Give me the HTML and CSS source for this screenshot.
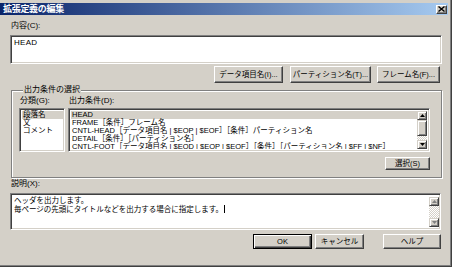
FILE: index.html
```html
<!DOCTYPE html>
<html lang="ja">
<head>
<meta charset="utf-8">
<link rel="stylesheet" href="styles.css">
</head>
<body>
<div class="window">
  <div class="titlebar">
    <span class="title">拡張定義の編集</span>
    <span class="close"><svg width="7" height="6" viewBox="0 0 7 6"><path d="M0.5 0.5 L6.5 5.5 M6.5 0.5 L0.5 5.5" stroke="#000" stroke-width="1.4"/></svg></span>
  </div>
  <div class="body">
    <div class="label">内容(C):</div>
    <div class="edit edit-content"><div class="edit-text content-text">HEAD</div></div>
    <div class="btnrow btnrow-top">
      <button class="btn btn-data">データ項目名(I)...</button>
      <button class="btn btn-part">パーティション名(T)...</button>
      <button class="btn btn-frame">フレーム名(F)...</button>
    </div>
    <fieldset class="group">
      <legend>出力条件の選択</legend>
      <div class="cols">
        <div class="col">
          <div class="label sub-label">分類(G):</div>
          <div class="list list-cat">
            <div class="item sel">段落名</div>
            <div class="item">文</div>
            <div class="item">コメント</div>
          </div>
        </div>
        <div class="col">
          <div class="label sub-label">出力条件(D):</div>
          <div class="list list-cond">
            <div class="items">
              <div class="item sel">HEAD</div>
              <div class="item">FRAME［条件］フレーム名</div>
              <div class="item">CNTL-HEAD［データ項目名 | $EOP | $EOF］［条件］パーティション名</div>
              <div class="item">DETAIL［条件］［パーティション名］</div>
              <div class="item">CNTL-FOOT［データ項目名 | $EOD | $EOP | $EOF］［条件］［パーティション名 | $FF | $NF］</div>
            </div>
            <div class="vscroll">
              <div class="arrow up"><svg width="5" height="3" viewBox="0 0 5 3"><path d="M2.5 0 L5 3 L0 3 Z" fill="#000"/></svg></div>
              <div class="thumb"></div>
              <div class="track"></div>
              <div class="arrow down"><svg width="5" height="3" viewBox="0 0 5 3"><path d="M0 0 L5 0 L2.5 3 Z" fill="#000"/></svg></div>
            </div>
          </div>
        </div>
      </div>
      <div class="btnrow btnrow-select">
        <button class="btn btn-select">選択(S)</button>
      </div>
    </fieldset>
    <div class="label label-desc">説明(X):</div>
    <div class="edit edit-desc">
      <div class="edit-text desc-text">ヘッダを出力します。<br>毎ページの先頭にタイトルなどを出力する場合に指定します。<span class="caret"></span></div>
      <div class="vscroll vscroll-desc">
        <div class="arrow up"><svg width="5" height="3" viewBox="0 0 5 3"><path d="M2.5 0 L5 3 L0 3 Z" fill="#808080"/></svg></div>
        <div class="track"></div>
        <div class="arrow down"><svg width="5" height="3" viewBox="0 0 5 3"><path d="M0 0 L5 0 L2.5 3 Z" fill="#808080"/></svg></div>
      </div>
    </div>
    <div class="btnrow btnrow-bottom">
      <button class="btn btn-default btn-ok">OK</button>
      <button class="btn btn-cancel">キャンセル</button>
      <button class="btn btn-help">ヘルプ</button>
    </div>
  </div>
</div>
</body>
</html>
```

FILE: styles.css
```css
html, body {
  margin: 0;
  padding: 0;
  background: #d4d0c8;
}
body {
  font-family: "Liberation Sans", "Noto Sans CJK JP", sans-serif;
  font-size: 7.5px;
  color: #000;
}
.window {
  width: 452px;
  height: 267px;
  box-sizing: border-box;
  padding-top: 3px;
  background: #d4d0c8;
  box-shadow: inset -1px -1px 0 #404040, inset -2px -2px 0 #808080;
  overflow: hidden;
}
.titlebar {
  width: 448px;
  height: 12px;
  display: flex;
  align-items: center;
  justify-content: space-between;
  background: linear-gradient(to right, #0a246a, #a6caf0);
}
.title {
  color: #fff;
  font-weight: bold;
  font-size: 9px;
  line-height: 12px;
  padding-left: 3px;
  letter-spacing: -0.3px;
}
.close {
  width: 11px;
  height: 9px;
  box-sizing: border-box;
  margin-right: 1px;
  background: #d4d0c8;
  border: 1px solid;
  border-color: #fff #404040 #404040 #fff;
  box-shadow: inset -1px -1px 0 #808080;
  display: flex;
  align-items: center;
  justify-content: center;
}
.close svg { display: block; }
.body {
  padding-left: 10px;
}
.label {
  line-height: 10px;
  height: 10px;
  margin-top: 6px;
  padding-left: 1px;
  white-space: nowrap;
  font-size: 8px;
}
.edit {
  box-sizing: border-box;
  background: #fff;
  border: 1px solid;
  border-color: #808080 #fff #fff #808080;
  box-shadow: inset 1px 1px 0 #404040, inset -1px -1px 0 #d4d0c8;
  position: relative;
  overflow: hidden;
}
.edit-content {
  margin-top: 4px;
  width: 432px;
  height: 29px;
}
.edit-text {
  padding: 2px 0 0 3px;
  line-height: 8px;
  white-space: nowrap;
}
.content-text {
  font-size: 8px;
  padding-top: 3px;
  letter-spacing: 0.3px;
}
.btnrow {
  display: flex;
  justify-content: flex-end;
}
.btn {
  font-family: inherit;
  font-size: 7.5px;
  color: #000;
  margin: 0;
  padding: 0;
  background: #d4d0c8;
  box-sizing: border-box;
  border: 1px solid;
  border-color: #fff #404040 #404040 #fff;
  box-shadow: inset -1px -1px 0 #808080;
  white-space: nowrap;
  line-height: 1;
  display: flex;
  align-items: center;
  justify-content: center;
}
.btnrow-top {
  margin-top: 2px;
  width: 430px;
}
.btnrow-top .btn { height: 17px; }
.btn-data { width: 69px; }
.btn-part { width: 81px; margin-left: 7px; }
.btn-frame { width: 63px; margin-left: 6px; }

.group {
  margin: 2px 0 0 1px;
  padding: 0 11px 7px 7px;
  width: 431px;
  box-sizing: border-box;
  border: 1px solid #808080;
  box-shadow: inset 1px 1px 0 #fff, 1px 1px 0 #fff;
  min-width: 0;
}
.group legend {
  padding: 0 1px;
  margin-left: 4px;
  line-height: 10px;
  height: 10px;
  font-size: 8px;
  background: #d4d0c8;
}
.cols {
  display: flex;
  gap: 3px;
}
.sub-label {
  margin-top: 1px;
  margin-bottom: 2px;
}
.list {
  box-sizing: border-box;
  height: 44px;
  background: #fff;
  border: 1px solid;
  border-color: #808080 #fff #fff #808080;
  box-shadow: inset 1px 1px 0 #404040, inset -1px -1px 0 #d4d0c8;
  padding: 2px 2px 2px 2px;
  overflow: hidden;
}
.list-cat {
  width: 46px;
  padding-right: 1px;
}
.list-cond {
  width: 362px;
  display: flex;
}
.items {
  flex: 1;
  min-width: 0;
  overflow: hidden;
}
.item {
  line-height: 8px;
  height: 8px;
  padding-left: 1px;
  white-space: nowrap;
}
.item.sel {
  background: #d4d0c8;
}
.vscroll {
  width: 10px;
  display: flex;
  flex-direction: column;
  flex: none;
}
.arrow {
  height: 9px;
  flex: none;
  box-sizing: border-box;
  background: #d4d0c8;
  border: 1px solid;
  border-color: #d4d0c8 #404040 #404040 #d4d0c8;
  box-shadow: inset 1px 1px 0 #fff, inset -1px -1px 0 #808080;
  display: flex;
  align-items: center;
  justify-content: center;
}
.arrow svg { display: block; }
.thumb {
  height: 16px;
  flex: none;
  box-sizing: border-box;
  background: #d4d0c8;
  border: 1px solid;
  border-color: #d4d0c8 #404040 #404040 #d4d0c8;
  box-shadow: inset 1px 1px 0 #fff, inset -1px -1px 0 #808080;
}
.track {
  flex: 1;
  background: repeating-conic-gradient(#fff 0 25%, #d4d0c8 0 50%) 0 0 / 2px 2px;
}
.btnrow-select {
  margin-top: 5px;
}
.btn-select {
  width: 45px;
  height: 13px;
}
.label-desc {
  margin-top: 1px;
}
.edit-desc {
  margin-top: 4px;
  width: 431px;
  height: 37px;
  display: flex;
  padding: 2px 1px 2px 2px;
}
.desc-text {
  flex: 1;
  padding: 1px 0 0 1px;
}
.caret {
  display: inline-block;
  width: 1px;
  height: 8px;
  background: #000;
  vertical-align: -1px;
  margin-left: 1px;
}
.vscroll-desc {
  width: 10px;
  margin-top: 1px;
}
.btnrow-bottom {
  margin-top: 4px;
  width: 431px;
}
.btnrow-bottom .btn { height: 15px; }
.btn-default {
  border: 1px solid #000;
  box-shadow: inset 1px 1px 0 #fff, inset -1px -1px 0 #404040, inset -2px -2px 0 #808080;
}
.btn-ok { width: 59px; }
.btn-cancel { width: 49px; margin-left: 3px; }
.btn-help { width: 58px; margin-left: 19px; }
```
